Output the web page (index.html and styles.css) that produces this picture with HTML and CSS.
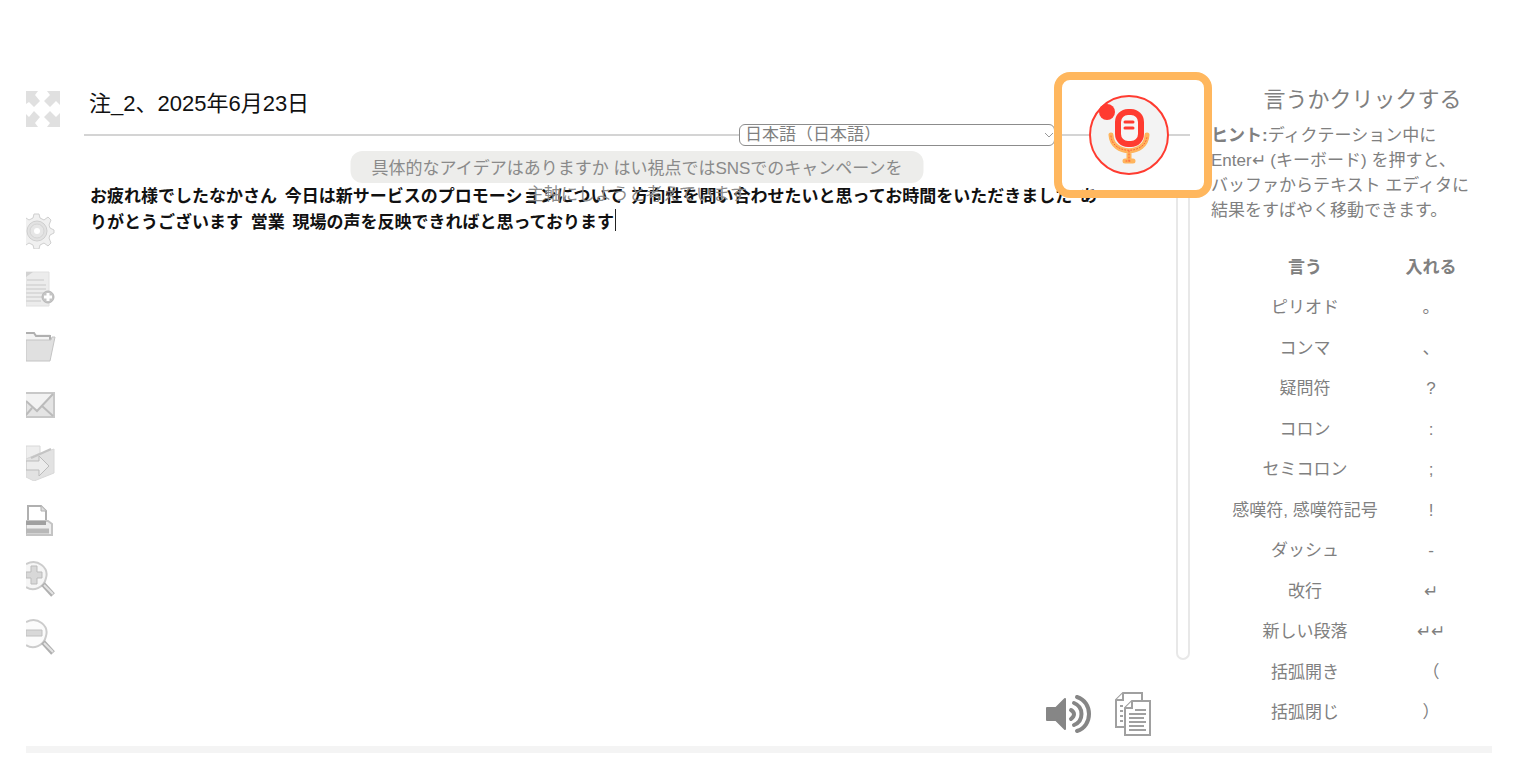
FILE: index.html
```html
<!DOCTYPE html>
<html lang="ja">

	<head>
		<meta charset="UTF-8">
		<title>音声ノート</title>
		<link rel="stylesheet" href="styles.css">
	</head>

	<body>
		<div class="page">
			<nav class="tools" aria-label="ツール">
				<button class="tool full" type="button" aria-label="全画面">
					<svg viewBox="0 0 36 36" fill="#e0e0e0">
						<path d="M0 0h12l-3 4 5 6-6 6-5-5-3 2z" />
						<path d="M21 0h13v14l-4-4-6 6-6-6 6-6z" />
						<path d="M0 36V23l3 3 5-6 6 6-5 6 3 4z" />
						<path d="M34 36H21l3-4-6-6 6-6 6 6 4-4z" />
					</svg>
				</button>
				<button class="tool" type="button" aria-label="設定">
					<svg viewBox="0 0 36 36" fill="#f0f0f0" stroke="#cfcfcf">
						<path d="M0 5l3 2 4-2 1-4h5l1 4 4 2 4-3 3 3-2 5 1 3 4 2v3l-4 2-1 3 2 5-3 3-4-3-4 2-1 4H8l-1-4-4-2-3 2" />
						<circle cx="11" cy="18" r="10" fill="#e2e2e2" />
						<circle cx="11" cy="18" r="7" fill="#e6e6e6" stroke="#d4d4d4" />
						<circle cx="11" cy="18" r="3" fill="#fff" stroke="none" />
					</svg>
				</button>
				<button class="tool" type="button" aria-label="新規ノート">
					<svg viewBox="0 0 36 36" fill="none">
						<path d="M0 1h23v34H0z" fill="#ececec" stroke="#e0e0e0" />
						<path d="M0 6l7-5H0z" fill="#d2d2d2" />
						<path d="M1 9h17M0 14h20M0 18h20M0 22h19M0 26h16M0 30h15" stroke="#dadada" stroke-width="2" />
						<circle cx="22" cy="26" r="6" fill="#c4c4c4" stroke="#b8b8b8" />
						<path d="M22 22v8M18 26h8" stroke="#fff" stroke-width="3" />
					</svg>
				</button>
				<button class="tool" type="button" aria-label="開く">
					<svg viewBox="0 0 36 36" fill="#e0e0e0" stroke="#c4c4c4">
						<path d="M0 5h24v8H0z" fill="#f4f4f4" stroke="none" />
						<path d="M0 4h8l2 3h14v4" fill="none" stroke="#b0b0b0" stroke-width="2" />
						<path d="M0 11h25l1-3h3l-5 24H0z" />
					</svg>
				</button>
				<button class="tool" type="button" aria-label="メール">
					<svg viewBox="0 0 36 36" fill="none" stroke="#bbb">
						<path d="M0 6h28v24H0z" fill="#e4e4e4" stroke="#c8c8c8" stroke-width="2" />
						<path d="M0 7h27L11 24 0 14z" fill="#f2f2f2" stroke="none" />
						<path d="M0 28l6-7M16 19l11 10M0 14l11 10L27 7" stroke-width="2" />
					</svg>
				</button>
				<button class="tool" type="button" aria-label="エクスポート">
					<svg viewBox="0 0 36 36" fill="#e2e2e2" stroke="#d8d8d8">
						<path d="M0 1h14v7L0 14z" fill="#eee" />
						<path d="M0 14L28 4v24L8 36l-8-4z" />
						<path d="M5 13L25 4" stroke="#c4c4c4" stroke-width="2" />
						<path d="M0 16h13v-5l10 10-10 10v-6H0z" fill="#ececec" stroke="#bbb" />
					</svg>
				</button>
				<button class="tool" type="button" aria-label="印刷">
					<svg viewBox="0 0 36 36" fill="none" stroke="#b0b0b0" stroke-width="2">
						<path d="M2 18V3h13l5 5v10" fill="#fff" />
						<path d="M15 3v5h5" fill="#ddd" stroke-width="1" />
						<path d="M0 18h22l4 3v11H0z" fill="#ededed" stroke="#c4c4c4" />
						<path d="M0 20h20" stroke="#a0a0a0" stroke-width="4" />
						<path d="M0 28h23" stroke="#b8b8b8" stroke-width="5" />
					</svg>
				</button>
				<button class="tool" type="button" aria-label="拡大">
					<svg viewBox="0 0 36 36" fill="none">
						<path d="M0 3c12-6 23 4 20 14-2 10-13 14-20 9" fill="#f6f6f6" stroke="#ccc" stroke-width="2" />
						<path d="M5 5h6v6h5v6h-5v6H5v-6H0v-6h5z" fill="#d8d8d8" stroke="#bbb" />
						<path d="M17 23l10 11" stroke="#b0b0b0" stroke-width="5" />
						<path d="M18 24l9 9" stroke="#e4e4e4" stroke-width="2" />
					</svg>
				</button>
				<button class="tool" type="button" aria-label="縮小">
					<svg viewBox="0 0 36 36" fill="none">
						<path d="M0 3c12-6 23 4 20 14-2 10-13 14-20 9" fill="#fbfbfb" stroke="#ccc" stroke-width="2" />
						<path d="M0 11h16v6H0z" fill="#d8d8d8" stroke="#c0c0c0" />
						<path d="M17 23l10 11" stroke="#b0b0b0" stroke-width="5" />
						<path d="M18 24l9 9" stroke="#e4e4e4" stroke-width="2" />
					</svg>
				</button>
			</nav>

			<main class="note">
				<input class="title" type="text" aria-label="タイトル" value="注_2、2025年6月23日">
				<div class="lang-row">
					<span class="rule grow"></span>
					<select class="lang" aria-label="言語">
						<option>日本語（日本語）</option>
					</select>
					<span class="rule"></span>
					<div class="mic-box">
						<button class="mic" type="button" aria-label="録音">
							<svg viewBox="0 0 80 80" fill="none" stroke-linecap="round">
								<circle cx="40" cy="40" r="39" fill="#f3f3f3" stroke="#ff3b30" stroke-width="2" />
								<circle cx="18" cy="17" r="8" fill="#ff3b30" />
								<path d="M22 40c1 21 35 21 36 0M40 56v10M36 66h8" stroke="#ffb45c" stroke-width="5" />
								<path d="M22 41c1 19 35 19 36 0M40 56v10M37 66h6" stroke="#ff5b38" stroke-dasharray="1 2" />
								<rect x="29" y="17" width="23" height="32" rx="10" fill="#f6f6f6" stroke="#ff3b30" stroke-width="6" />
								<path d="M36 27h8M36 33h8" stroke="#ff3b30" stroke-width="3" />
							</svg>
						</button>
						<span class="frame"></span>
					</div>
					<span class="rule last"></span>
				</div>
				<div class="editor">
					<textarea class="text" aria-label="本文" spellcheck="false">お疲れ様でしたなかさん  今日は新サービスのプロモーションについて  方向性を問い合わせたいと思ってお時間をいただきました  ありがとうございます  営業  現場の声を反映できればと思っております</textarea>
					<span class="caret"></span>
					<div class="track"></div>
					<div class="buffer">具体的なアイデアはありますか はい視点ではSNSでのキャンペーンを<br>主軸にしようと考えています</div>
				</div>
				<div class="actions">
					<button class="action" type="button" aria-label="読み上げ">
						<svg width="46" height="44" viewBox="0 0 46 44" fill="none" stroke="#868686" stroke-width="4" stroke-linecap="round">
							<path d="M2 16h9l9-9v30l-9-9H2z" fill="#868686" stroke-width="2" stroke-linejoin="round" />
							<path d="M26 18q6 4 0 9M29 11c10 4 10 18 0 22M32 5c16 5 16 29 0 34" />
						</svg>
					</button>
					<button class="action" type="button" aria-label="コピー">
						<svg width="36" height="44" viewBox="0 0 36 44" fill="#fff" stroke="#a0a0a0" stroke-width="2">
							<path d="M8 1h19v34H1V8z" />
							<path d="M8 1v7H1" />
							<path d="M5 14h3M5 19h3M5 24h3M5 29h3" />
							<path d="M17 9h18v34H10V16z" />
							<path d="M17 9v7h-7M20 18h11M14 22h17M14 26h15M14 30h17M14 34h15M14 38h17" />
						</svg>
					</button>
				</div>
			</main>

			<aside class="help">
				<h2>言うかクリックする</h2>
				<p><b>ヒント:</b>ディクテーション中に<br>Enter↵ (キーボード) を押すと、<br>バッファからテキスト エディタに<br>結果をすばやく移動できます。</p>
				<table>
					<thead>
						<tr><th scope="col">言う</th><th scope="col" class="put">入れる</th></tr>
					</thead>
					<tbody>
						<tr><td>ピリオド</td><td>。</td></tr>
						<tr><td>コンマ</td><td>、</td></tr>
						<tr><td>疑問符</td><td>?</td></tr>
						<tr><td>コロン</td><td>:</td></tr>
						<tr><td>セミコロン</td><td>;</td></tr>
						<tr><td>感嘆符, 感嘆符記号</td><td>!</td></tr>
						<tr><td>ダッシュ</td><td>-</td></tr>
						<tr><td>改行</td><td>↵</td></tr>
						<tr><td>新しい段落</td><td>↵↵</td></tr>
						<tr><td>括弧開き</td><td>（</td></tr>
						<tr><td>括弧閉じ</td><td>）</td></tr>
					</tbody>
				</table>
			</aside>
		</div>
	</body>

</html>
```

FILE: styles.css
```css
* {
	box-sizing: border-box;
}

body {
	margin: 0;
	background-color: #fff;
	color: #808080;
	font-family: "Liberation Sans", "Noto Sans CJK JP", sans-serif;
	font-size: 17px;
}

button, input, select, textarea {
	font-family: inherit;
	margin: 0;
}

button {
	padding: 0;
	border: none;
	background: none;
	cursor: pointer;
}

svg {
	display: block;
}

.page {
	display: flex;
	margin: 0 28px 0 26px;
	padding-top: 84px;
	border-bottom: 7px solid #f4f4f4;
}

/* 左のツールバー */
.tools {
	width: 58px;
	display: flex;
	flex-direction: column;
	gap: 22px;
	padding-top: 7px;
}

.tool {
	width: 36px;
	height: 36px;
}

.full {
	margin-bottom: 64px;
}

/* ノート */
.note {
	flex: 1;
	min-width: 0;
	display: flex;
	flex-direction: column;
}

.title {
	height: 34px;
	margin-bottom: 6px;
	padding: 0 5px;
	border: none;
	outline: none;
	background: none;
	color: #111;
	font-size: 22px;
}

.lang-row {
	display: flex;
	align-items: center;
	height: 22px;
}

.rule {
	width: 34px;
	height: 2px;
	background-color: #d4d4d4;
}

.grow {
	flex: 1;
}

.last {
	width: 21px;
}

.lang {
	width: 316px;
	height: 22px;
	padding: 0 5px;
	border: 1px solid #8c8c8c;
	border-radius: 6px;
	appearance: none;
	background: #fff url("data:image/svg+xml,%3Csvg xmlns='http://www.w3.org/2000/svg' width='10' height='6'%3E%3Cpath d='M1 1l4 4 4-4' fill='none' stroke='%23999'/%3E%3C/svg%3E") no-repeat right center;
	color: #808080;
	font-size: 17px;
	line-height: 18px;
}

.mic-box {
	position: relative;
	z-index: 2;
	margin: -29px 0;
}

.mic {
	display: block;
	width: 80px;
	height: 80px;
}

.frame {
	position: absolute;
	top: -23px;
	right: -43px;
	bottom: -23px;
	left: -35px;
	border: 8px solid #ffb75e;
	border-radius: 16px;
	pointer-events: none;
}

.editor {
	position: relative;
	flex: 1;
	display: flex;
	padding-top: 36px;
}

.text {
	flex: 1;
	padding: 0 70px 0 6px;
	border: none;
	outline: none;
	resize: none;
	overflow: hidden;
	background: none;
	color: #111;
	font-family: "Noto Sans CJK JP", sans-serif;
	font-size: 17px;
	font-weight: bold;
	line-height: 26px;
}

.caret {
	position: absolute;
	top: 63px;
	left: 531px;
	width: 1px;
	height: 22px;
	background-color: #222;
}

.track {
	width: 14px;
	margin-top: 12px;
	border: 2px solid #e8e8e8;
	border-top: none;
	border-radius: 0 0 7px 7px;
}

/* 認識中のテキスト */
.buffer {
	position: absolute;
	top: 5px;
	left: 50%;
	transform: translateX(-50%);
	height: 32px;
	padding: 5px 21px;
	border-radius: 12px;
	background-color: #ededeb;
	color: #8a8a8a;
	line-height: 26px;
	text-align: center;
	white-space: nowrap;
}

.actions {
	display: flex;
	justify-content: flex-end;
	gap: 24px;
	padding: 32px 39px 10px;
}

/* 右のヘルプ */
.help {
	width: 302px;
	padding: 0 0 13px 21px;
}

.help h2 {
	margin: 0;
	padding-left: 22px;
	font-size: 22px;
	font-weight: normal;
	line-height: 32px;
	text-align: center;
}

.help p {
	margin: 7px 0 25px;
	line-height: 25px;
	white-space: nowrap;
}

table {
	width: 252px;
	border-collapse: collapse;
	line-height: 24px;
	text-align: center;
}

tr {
	height: 40px;
}

tr:nth-child(even) {
	height: 41px;
}

th, td {
	padding: 0;
	white-space: nowrap;
}

.put {
	width: 64px;
}
```
